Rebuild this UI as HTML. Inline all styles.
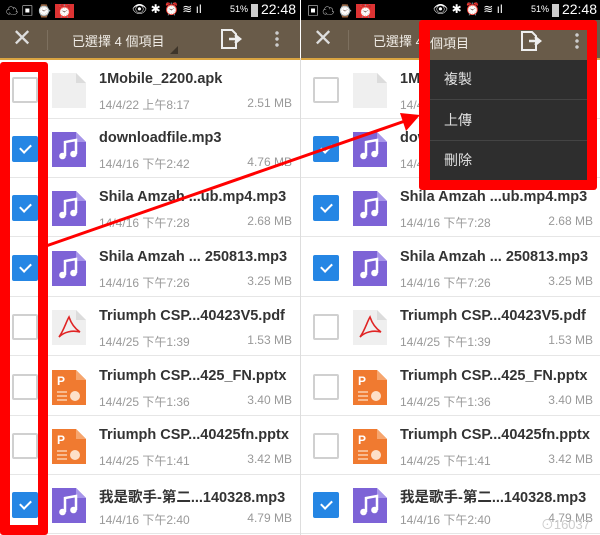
<!DOCTYPE html>
<html><head><meta charset="utf-8"><style>
*{margin:0;padding:0;box-sizing:border-box}
body{width:600px;height:535px;overflow:hidden;background:#fff;font-family:"Liberation Sans","Noto Sans CJK TC",sans-serif;position:relative}
.panel{position:absolute;top:0;width:300px;height:535px;overflow:hidden;background:#fff}
.sb{position:absolute;left:0;top:0;width:300px;height:20px;background:#000;color:#fff;font-size:14px}
.sb .t{position:absolute;right:4px;top:1px}
.sb .p{position:absolute;right:52px;top:4px;font-size:9px}
.tb{position:absolute;left:0;top:20px;width:300px;height:38px;background:#695b49}
.tb:after{content:"";position:absolute;left:0;right:0;bottom:-2px;height:2px;background:#d9a441}
.tb .ttl{position:absolute;left:72px;top:11px;color:#f0ece6;font-size:13px}
.row{position:absolute;left:0;width:300px;height:59px;border-bottom:1px solid #e6e6e6}
.cb{position:absolute;left:12px;top:17px;width:26px;height:26px;border:2px solid #d0d0d0;border-radius:2px;background:#fff}
.cb.on{background:#2586e4;border-color:#2586e4}
.cb.on:after{content:"";position:absolute;left:6px;top:6px;width:9px;height:5px;border-left:2px solid #fff;border-bottom:2px solid #fff;transform:rotate(-45deg)}
.ic{position:absolute;left:52px;top:13px;width:34px;height:35px}
.n{position:absolute;left:99px;top:11px;font-size:14.5px;font-weight:bold;color:#333;white-space:nowrap}
.m{position:absolute;left:99px;top:36px;font-size:12px;color:#999;white-space:nowrap}
.s{position:absolute;right:8px;top:36px;font-size:12px;color:#999}
</style></head><body>

<svg width="0" height="0" style="position:absolute"><defs>
<g id="mus"><path d="M0 0H24L34 10V35H0Z" fill="#7d63d6"/><path d="M24 0V10H34Z" fill="#a896ea"/><path d="M13 24V10L24 8V22" stroke="#fff" stroke-width="2.5" fill="none"/><circle cx="10.5" cy="24" r="3.3" fill="#fff"/><circle cx="21.5" cy="22" r="3.3" fill="#fff"/></g>
<g id="apk"><path d="M0 0H24L34 10V35H0Z" fill="#efefef"/><path d="M24 0V10H34Z" fill="#dcdcdc"/></g>
<g id="pdf"><path d="M0 0H24L34 10V35H0Z" fill="#efefef"/><path d="M24 0V10H34Z" fill="#dcdcdc"/><path d="M17 7C14 12 12 20 7 27C12 22 20 20 28 22C22 18 19 13 17 7Z" stroke="#e02424" stroke-width="1.6" fill="none"/></g>
<g id="ppt"><path d="M0 0H24L34 10V35H0Z" fill="#f07a30"/><path d="M24 0V10H34Z" fill="#f6a56e"/><text x="5" y="15" font-size="12" font-weight="bold" fill="#fff" font-family="Liberation Sans">P</text><path d="M5 22H15M5 26H15M5 30H15" stroke="#fde0c8" stroke-width="1.3"/><circle cx="23" cy="26" r="5" fill="#fde0c8"/></g>
</defs></svg>

<div class="panel" style="left:0">
<div class="sb"><span style="position:absolute;left:6px;top:2px;font-size:12px">☁ ▣ ⌚ <span style="background:#d33;padding:0 2px">⏰</span></span><span style="position:absolute;left:132px;top:2px;font-size:12px">👁 ✱ ⏰ ≋ ıl</span><span class="p">51%</span><span style="position:absolute;right:42px;top:4px;width:7px;height:13px;background:#ccc"></span><span class="t">22:48</span></div>
<div class="tb"><span style="position:absolute;left:12px;top:4px;color:#ddd;font-size:24px;font-weight:100">✕</span><span style="position:absolute;left:47px;top:10px;width:1px;height:20px;background:#7d705f"></span><span class="ttl">已選擇 4 個項目</span><span style="position:absolute;left:170px;top:26px;border:4px solid transparent;border-right-color:#3e352a;border-bottom-color:#3e352a"></span><svg style="position:absolute;left:220px;top:8px" width="22" height="22"><path d="M2 2H12L16 6V20H2Z" fill="none" stroke="#eee" stroke-width="2"/><path d="M9 11H18M15 7L20 11L15 15" fill="none" stroke="#eee" stroke-width="2.5"/></svg><span style="position:absolute;left:275px;top:10px;width:4px;height:18px;background:radial-gradient(circle,#ccc 1.5px,transparent 2px) 0 0/4px 6px"></span></div>
</div>

<div class="panel" style="left:301px">
<div class="sb"><span style="position:absolute;left:6px;top:2px;font-size:12px">▣ ☁ ⌚ <span style="background:#d33;padding:0 2px">⏰</span></span><span style="position:absolute;left:132px;top:2px;font-size:12px">👁 ✱ ⏰ ≋ ıl</span><span class="p">51%</span><span style="position:absolute;right:42px;top:4px;width:7px;height:13px;background:#ccc"></span><span class="t">22:48</span></div>
<div class="tb"><span style="position:absolute;left:12px;top:4px;color:#ddd;font-size:24px">✕</span><span style="position:absolute;left:47px;top:10px;width:1px;height:20px;background:#7d705f"></span><span class="ttl">已選擇 4 個項目</span><span style="position:absolute;left:170px;top:26px;border:4px solid transparent;border-right-color:#3e352a;border-bottom-color:#3e352a"></span></div>
</div>
<div style="position:absolute;left:300px;top:58px;width:1px;height:477px;background:#ddd"></div>

<div style="position:absolute;left:0;top:0">
<div class="row" style="top:60px"><div class="cb"></div><svg class="ic"><use href="#apk"/></svg><div class="n">1Mobile_2200.apk</div><div class="m">14/4/22 上午8:17</div><div class="s">2.51 MB</div></div>
<div class="row" style="top:119px"><div class="cb on"></div><svg class="ic"><use href="#mus"/></svg><div class="n">downloadfile.mp3</div><div class="m">14/4/16 下午2:42</div><div class="s">4.76 MB</div></div>
<div class="row" style="top:178px"><div class="cb on"></div><svg class="ic"><use href="#mus"/></svg><div class="n">Shila Amzah ...ub.mp4.mp3</div><div class="m">14/4/16 下午7:28</div><div class="s">2.68 MB</div></div>
<div class="row" style="top:238px"><div class="cb on"></div><svg class="ic"><use href="#mus"/></svg><div class="n">Shila Amzah ... 250813.mp3</div><div class="m">14/4/16 下午7:26</div><div class="s">3.25 MB</div></div>
<div class="row" style="top:297px"><div class="cb"></div><svg class="ic"><use href="#pdf"/></svg><div class="n">Triumph CSP...40423V5.pdf</div><div class="m">14/4/25 下午1:39</div><div class="s">1.53 MB</div></div>
<div class="row" style="top:357px"><div class="cb"></div><svg class="ic"><use href="#ppt"/></svg><div class="n">Triumph CSP...425_FN.pptx</div><div class="m">14/4/25 下午1:36</div><div class="s">3.40 MB</div></div>
<div class="row" style="top:416px"><div class="cb"></div><svg class="ic"><use href="#ppt"/></svg><div class="n">Triumph CSP...40425fn.pptx</div><div class="m">14/4/25 下午1:41</div><div class="s">3.42 MB</div></div>
<div class="row" style="top:475px"><div class="cb on"></div><svg class="ic"><use href="#mus"/></svg><div class="n">我是歌手-第二...140328.mp3</div><div class="m">14/4/16 下午2:40</div><div class="s">4.79 MB</div></div>
</div>

<div style="position:absolute;left:301px;top:0;width:299px;height:535px;overflow:hidden">
<div class="row" style="top:60px"><div class="cb"></div><svg class="ic"><use href="#apk"/></svg><div class="n">1Mobile_2200.apk</div><div class="m">14/4/22 上午8:17</div><div class="s">2.51 MB</div></div>
<div class="row" style="top:119px"><div class="cb on"></div><svg class="ic"><use href="#mus"/></svg><div class="n">downloadfile.mp3</div><div class="m">14/4/16 下午2:42</div><div class="s">4.76 MB</div></div>
<div class="row" style="top:178px"><div class="cb on"></div><svg class="ic"><use href="#mus"/></svg><div class="n">Shila Amzah ...ub.mp4.mp3</div><div class="m">14/4/16 下午7:28</div><div class="s">2.68 MB</div></div>
<div class="row" style="top:238px"><div class="cb on"></div><svg class="ic"><use href="#mus"/></svg><div class="n">Shila Amzah ... 250813.mp3</div><div class="m">14/4/16 下午7:26</div><div class="s">3.25 MB</div></div>
<div class="row" style="top:297px"><div class="cb"></div><svg class="ic"><use href="#pdf"/></svg><div class="n">Triumph CSP...40423V5.pdf</div><div class="m">14/4/25 下午1:39</div><div class="s">1.53 MB</div></div>
<div class="row" style="top:357px"><div class="cb"></div><svg class="ic"><use href="#ppt"/></svg><div class="n">Triumph CSP...425_FN.pptx</div><div class="m">14/4/25 下午1:36</div><div class="s">3.40 MB</div></div>
<div class="row" style="top:416px"><div class="cb"></div><svg class="ic"><use href="#ppt"/></svg><div class="n">Triumph CSP...40425fn.pptx</div><div class="m">14/4/25 下午1:41</div><div class="s">3.42 MB</div></div>
<div class="row" style="top:475px"><div class="cb on"></div><svg class="ic"><use href="#mus"/></svg><div class="n">我是歌手-第二...140328.mp3</div><div class="m">14/4/16 下午2:40</div><div class="s">4.79 MB</div></div>
</div>

<div style="position:absolute;left:419px;top:20px;width:178px;height:170px;background:#f00;border-radius:3px"></div>
<div style="position:absolute;left:430px;top:30px;width:157px;height:30px;background:#695b49"></div>
<svg style="position:absolute;left:520px;top:30px" width="22" height="22"><path d="M2 2H12L16 6V20H2Z" fill="none" stroke="#eee" stroke-width="2"/><path d="M9 11H18M15 7L20 11L15 15" fill="none" stroke="#eee" stroke-width="2.5"/></svg>
<span style="position:absolute;left:575px;top:32px;width:4px;height:18px;background:radial-gradient(circle,#ccc 1.5px,transparent 2px) 0 0/4px 6px"></span>
<span style="position:absolute;left:430px;top:33px;color:#f0ece6;font-size:13px">個項目</span>
<div style="position:absolute;left:430px;top:60px;width:157px;height:120px;background:#2e2e2e;color:#e0e0e0;font-size:14px">
<div style="height:40px;line-height:38px;padding-left:14px;border-bottom:1px solid #444">複製</div>
<div style="height:41px;line-height:40px;padding-left:14px;border-bottom:1px solid #444">上傳</div>
<div style="height:39px;line-height:38px;padding-left:14px">刪除</div>
</div>

<div style="position:absolute;left:0;top:62px;width:48px;height:473px;border:10px solid #f00;border-radius:3px"></div>

<svg style="position:absolute;left:0;top:0" width="600" height="535"><line x1="46" y1="246" x2="405" y2="121" stroke="#f00" stroke-width="3"/><path d="M420 115L400 113L406 131Z" fill="#f00"/></svg>

<span style="position:absolute;right:10px;bottom:2px;font-size:13px;color:#ccc">⊙16037</span>
</body></html>
